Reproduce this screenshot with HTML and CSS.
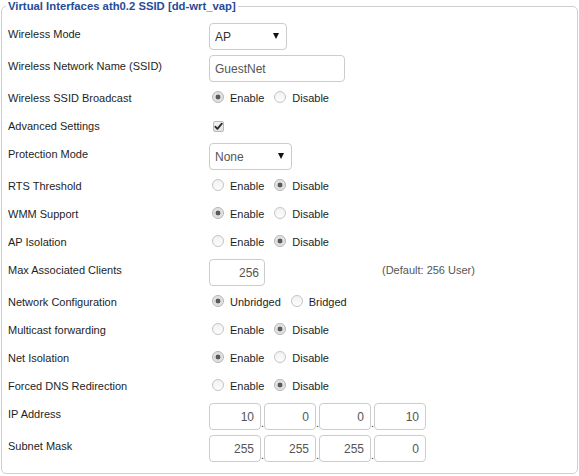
FILE: index.html
```html
<!DOCTYPE html>
<html lang="en">
<head>
<meta charset="utf-8">
<title>Virtual Interfaces</title>
<link rel="stylesheet" href="styles.css">
</head>
<body>
<fieldset class="vap">
  <legend class="vap-title">Virtual Interfaces ath0.2 SSID [dd-wrt_vap]</legend>

  <div class="setting">
    <div class="label">Wireless Mode</div>
    <div class="select-wrap w-mode">
      <select class="field select"><option>AP</option></select>
    </div>
  </div>

  <div class="setting">
    <div class="label">Wireless Network Name (SSID)</div>
    <input class="field text w-ssid" type="text" value="GuestNet">
  </div>

  <div class="setting">
    <div class="label">Wireless SSID Broadcast</div>
    <label class="opt"><input class="radio" type="radio" name="bcast" checked>Enable</label>
    <label class="opt"><input class="radio" type="radio" name="bcast">Disable</label>
  </div>

  <div class="setting">
    <div class="label">Advanced Settings</div>
    <span class="check">
      <svg viewBox="0 0 11 11" width="11" height="11" aria-hidden="true">
        <path d="M2.3 5.6 L4.4 7.9 L8.8 2.6" fill="none" stroke="#2b2b2b" stroke-width="1.8" stroke-linecap="round" stroke-linejoin="round"/>
      </svg>
    </span>
  </div>

  <div class="setting">
    <div class="label">Protection Mode</div>
    <div class="select-wrap w-prot">
      <select class="field select muted"><option>None</option></select>
    </div>
  </div>

  <div class="setting">
    <div class="label">RTS Threshold</div>
    <label class="opt"><input class="radio" type="radio" name="rts">Enable</label>
    <label class="opt"><input class="radio" type="radio" name="rts" checked>Disable</label>
  </div>

  <div class="setting">
    <div class="label">WMM Support</div>
    <label class="opt"><input class="radio" type="radio" name="wmm" checked>Enable</label>
    <label class="opt"><input class="radio" type="radio" name="wmm">Disable</label>
  </div>

  <div class="setting">
    <div class="label">AP Isolation</div>
    <label class="opt"><input class="radio" type="radio" name="apiso">Enable</label>
    <label class="opt"><input class="radio" type="radio" name="apiso" checked>Disable</label>
  </div>

  <div class="setting">
    <div class="label">Max Associated Clients</div>
    <input class="field text num w-max" type="text" value="256">
    <span class="default">(Default: 256 User)</span>
  </div>

  <div class="setting">
    <div class="label">Network Configuration</div>
    <label class="opt"><input class="radio" type="radio" name="bridge" checked>Unbridged</label>
    <label class="opt"><input class="radio" type="radio" name="bridge">Bridged</label>
  </div>

  <div class="setting">
    <div class="label">Multicast forwarding</div>
    <label class="opt"><input class="radio" type="radio" name="mcast">Enable</label>
    <label class="opt"><input class="radio" type="radio" name="mcast" checked>Disable</label>
  </div>

  <div class="setting">
    <div class="label">Net Isolation</div>
    <label class="opt"><input class="radio" type="radio" name="netiso" checked>Enable</label>
    <label class="opt"><input class="radio" type="radio" name="netiso">Disable</label>
  </div>

  <div class="setting">
    <div class="label">Forced DNS Redirection</div>
    <label class="opt"><input class="radio" type="radio" name="dns">Enable</label>
    <label class="opt"><input class="radio" type="radio" name="dns" checked>Disable</label>
  </div>

  <div class="setting">
    <div class="label">IP Address</div>
    <div class="octets">
      <input class="field text num octet" type="text" value="10"><span class="dot">.</span>
      <input class="field text num octet" type="text" value="0"><span class="dot">.</span>
      <input class="field text num octet" type="text" value="0"><span class="dot">.</span>
      <input class="field text num octet" type="text" value="10">
    </div>
  </div>

  <div class="setting">
    <div class="label">Subnet Mask</div>
    <div class="octets">
      <input class="field text num octet" type="text" value="255"><span class="dot">.</span>
      <input class="field text num octet" type="text" value="255"><span class="dot">.</span>
      <input class="field text num octet" type="text" value="255"><span class="dot">.</span>
      <input class="field text num octet" type="text" value="0">
    </div>
  </div>
</fieldset>
</body>
</html>
```

FILE: styles.css
```css
html, body {
  margin: 0;
  padding: 0;
  background: #fff;
}

body {
  font-family: "Liberation Sans", Arial, sans-serif;
  font-size: 11px;
  color: #1e1e1e;
}

/* Section frame */
.vap {
  margin: 0 1px 0 1px;
  padding: 8px 6px 9px 6px;
  border: 1px solid #cfcfcf;
  border-radius: 5px;
  min-width: 0;
}

.vap-title {
  margin-left: -2px;
  padding: 0 2px;
  font-size: 11.3px;
  line-height: 12px;
  font-weight: bold;
  color: #284b99;
}

/* One row per setting */
.setting {
  display: flex;
  align-items: flex-start;
  min-height: 28px;
}

.label {
  flex: 0 0 201px;
  line-height: 28px;
  white-space: nowrap;
}

/* Text inputs and selects */
.field {
  box-sizing: border-box;
  height: 27px;
  margin: 3px 0 2px 0;
  border: 1px solid #cccccc;
  border-radius: 4px;
  background: #fff;
  font-family: inherit;
  font-size: 12px;
  color: #555;
  padding: 0 5px;
  outline: none;
}

.w-ssid { width: 136px; }
.w-max  { width: 56px; }

.num {
  text-align: right;
  padding-right: 5px;
}

.select-wrap {
  position: relative;
}

.w-mode { width: 78px; }
.w-prot { width: 83px; }

.select {
  -webkit-appearance: none;
  appearance: none;
  width: 100%;
  color: #333;
  display: block;
}

.select.muted { color: #555; }

/* drop-down arrow laid over the select box */
.select-wrap::after {
  content: "";
  position: absolute;
  right: 8px;
  top: 13px;
  border-left: 3.5px solid transparent;
  border-right: 3.5px solid transparent;
  border-top: 6px solid #111;
  pointer-events: none;
}

/* Radio options */
.opt {
  display: inline-flex;
  align-items: center;
  height: 28px;
  margin-right: 7px;
  white-space: nowrap;
}

.radio {
  -webkit-appearance: none;
  appearance: none;
  box-sizing: border-box;
  width: 12px;
  height: 12px;
  margin: 0 6px 0 3px;
  border: 1px solid #c4c4c4;
  border-radius: 50%;
  background: linear-gradient(#f1f1f1, #fdfdfd);
  position: relative;
  top: -1px;
}

.radio:checked {
  border-color: #b5b5b5;
  background: radial-gradient(circle, #5a5a5a 0 2.1px, #dcdcdc 2.7px, #ebebeb 100%);
}

/* Checkbox */
.check {
  box-sizing: border-box;
  display: inline-flex;
  width: 11px;
  height: 11px;
  margin: 9px 0 0 4px;
  border: 1px solid #b9b9b9;
  border-radius: 2px;
  background: linear-gradient(#f3f3f3, #e2e2e2);
  overflow: hidden;
}

.check svg {
  margin: -1px;
  flex: none;
}

.default {
  margin-left: 117px;
  line-height: 28px;
  color: #555;
}

/* IP octet boxes */
.octets {
  display: flex;
  align-items: flex-start;
}

.octet {
  width: 52px;
  padding-right: 6px;
}

.dot {
  width: 3px;
  margin-top: 18px;
  line-height: 11px;
  color: #333;
}
```
